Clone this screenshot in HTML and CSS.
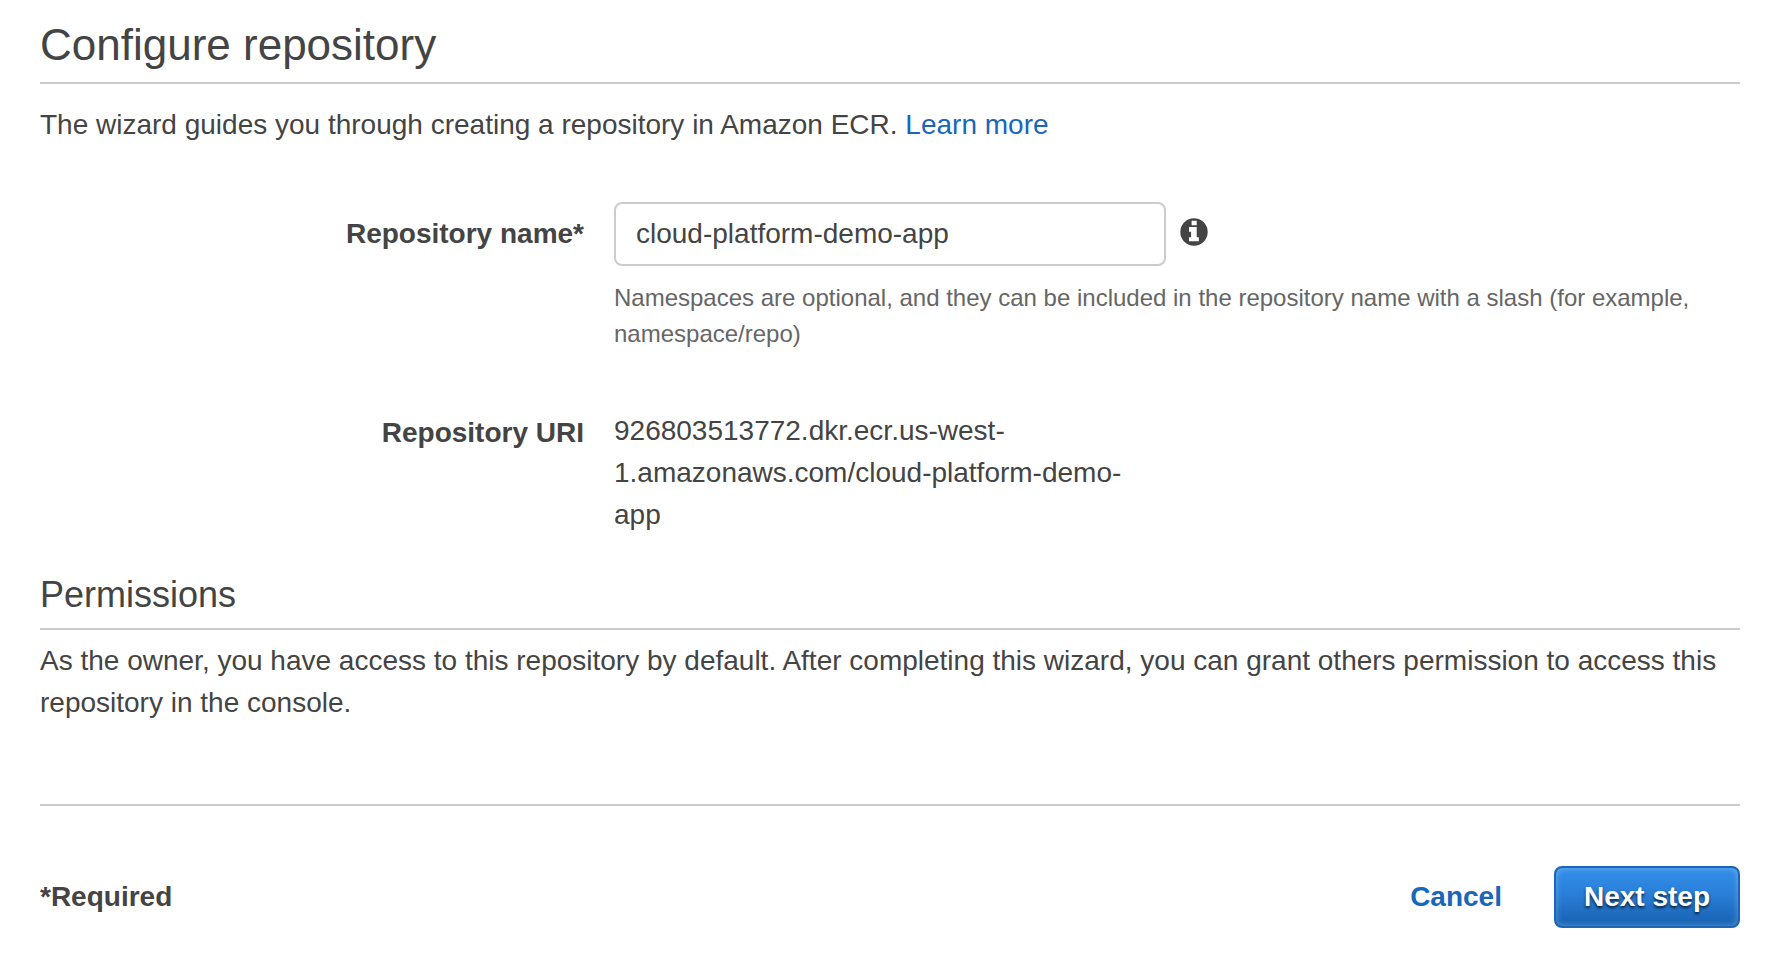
FILE: index.html
```html
<!DOCTYPE html>
<html lang="en">
<head>
<meta charset="utf-8">
<title>Configure repository</title>
<link rel="stylesheet" href="styles.css">
</head>
<body>
<main class="wizard">
  <form class="wizard-form">
    <h1 class="title">Configure repository</h1>
    <p class="intro">The wizard guides you through creating a repository in Amazon ECR. <a class="link" href="#">Learn more</a></p>

    <div class="fields">
      <label class="label label-input" for="repo-name">Repository name*</label>
      <div class="field">
        <div class="input-row">
          <input class="input" id="repo-name" type="text" value="cloud-platform-demo-app">
          <button class="info" type="button" aria-label="Repository name info">
            <svg class="info-icon" viewBox="0 0 28 28" aria-hidden="true">
              <circle cx="14" cy="14" r="13.7" fill="#444"/>
              <path d="M11.6 2.8h5.1v4.4h-5.1zM9 9h7.7v10.2h2.1v4H9v-4h2.1v-5.4H9z" fill="#fff"/>
            </svg>
          </button>
        </div>
        <p class="hint">Namespaces are optional, and they can be included in the repository name with a slash (for example, namespace/repo)</p>
      </div>
      <span class="label label-text">Repository URI</span>
      <div class="field uri">926803513772.dkr.ecr.us-west-1.amazonaws.com/cloud-platform-demo-app</div>
    </div>

    <h2 class="subtitle">Permissions</h2>
    <p class="permissions">As the owner, you have access to this repository by default. After completing this wizard, you can grant others permission to access this repository in the console.</p>

    <footer class="footer">
      <span class="required">*Required</span>
      <a class="link cancel" href="#">Cancel</a>
      <button class="next" type="submit">Next step</button>
    </footer>
  </form>
</main>
</body>
</html>
```
FILE: styles.css
```css
* {
  box-sizing: border-box;
}

body {
  margin: 0;
  background: #fff;
  color: #444;
  font: 28px/42px "Helvetica Neue", Helvetica, "Liberation Sans", Arial, sans-serif;
}

h1,
h2,
p {
  margin: 0;
  font-weight: 400;
}

.wizard {
  padding: 16px 40px;
}

.title {
  padding-bottom: 8px;
  border-bottom: 2px solid #ccc;
  font-size: 44px;
  line-height: 58px;
}

.intro {
  margin-top: 20px;
}

.link {
  color: #1a66b8;
  text-decoration: none;
}

.fields {
  display: grid;
  grid-template-columns: 544px 1fr;
  column-gap: 30px;
  row-gap: 58px;
  margin-top: 56px;
}

.label {
  font-weight: 700;
  text-align: right;
}

.label-input {
  padding-top: 11px;
}

.label-text {
  padding-top: 2px;
}

.input-row {
  display: flex;
  align-items: center;
  gap: 14px;
}

.input {
  width: 552px;
  height: 64px;
  padding: 0 20px;
  border: 2px solid #ccc;
  border-radius: 8px;
  color: #444;
  font: inherit;
}

.info {
  margin-bottom: 4px;
  padding: 0;
  border: 0;
  background: none;
}

.info-icon {
  display: block;
  width: 28px;
  height: 28px;
}

.hint {
  margin-top: 14px;
  color: #666;
  font-size: 24px;
  line-height: 36px;
}

.uri {
  max-width: 552px;
}

.subtitle {
  margin-top: 34px;
  padding-bottom: 8px;
  border-bottom: 2px solid #ccc;
  font-size: 36px;
  line-height: 50px;
}

.permissions {
  margin-top: 10px;
}

.footer {
  display: flex;
  align-items: center;
  margin-top: 80px;
  padding-top: 60px;
  border-top: 2px solid #ccc;
  font-weight: 700;
}

.cancel {
  margin-left: auto;
}

.next {
  margin-left: 52px;
  height: 62px;
  padding: 0 28px;
  border: 2px solid #1a66b8;
  border-radius: 8px;
  background: linear-gradient(#338fea, #2a7fd8 45%, #1a66b8 90%);
  box-shadow: inset 0 0 6px rgba(255, 255, 255, 0.3);
  color: #fff;
  font: inherit;
  text-shadow: 0 2px 3px rgba(0, 0, 0, 0.75);
}
```
